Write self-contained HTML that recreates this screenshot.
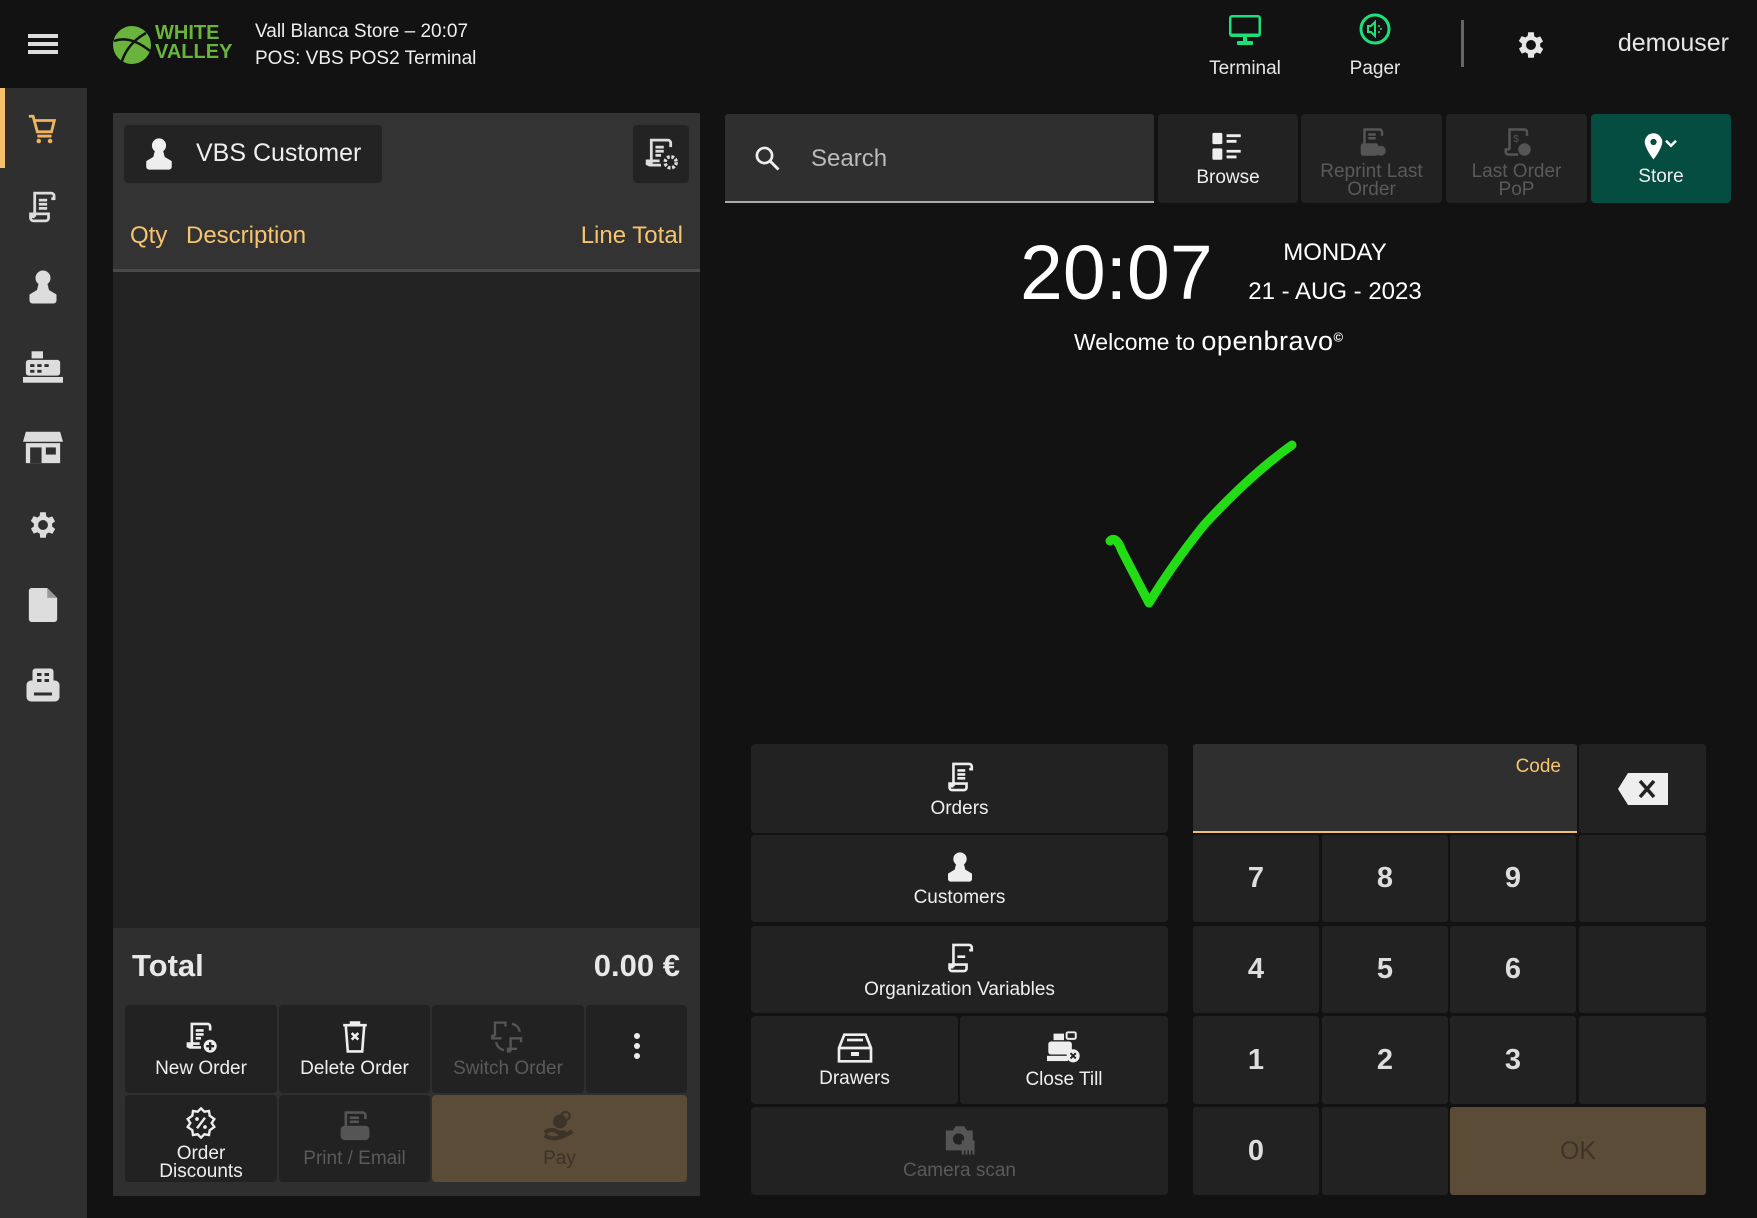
<!DOCTYPE html>
<html><head><meta charset="utf-8"><style>
*{margin:0;padding:0;box-sizing:border-box}
body{width:1757px;height:1218px;background:#121212;font-family:"Liberation Sans",sans-serif;color:#e6e6e6;position:relative;overflow:hidden}
.a{position:absolute}
.btn{position:absolute;background:#222;border-radius:4px;display:flex;flex-direction:column;align-items:center;justify-content:center;font-size:19px;color:#eee;text-align:center;line-height:18px}
.btn svg{margin-bottom:6px}
.dis{color:#5a5a5a}
.num{position:absolute;background:#222;border-radius:3px;display:flex;align-items:center;justify-content:center;font-size:29px;font-weight:bold;color:#ddd}
</style></head><body>
<div class="a" style="left:28px;top:34px;width:30px;height:4px;background:#ddd;box-shadow:0 8px 0 #ddd,0 16px 0 #ddd"></div>
<svg class="a" style="left:112px;top:25px" width="42" height="40" viewBox="0 0 42 40"><circle cx="20" cy="20" r="19" fill="#6ab43e"/><path d="M2 16 Q18 10 38 26 M10 36 Q16 18 34 8" stroke="#121212" stroke-width="2.5" fill="none"/></svg>
<div class="a" style="left:155px;top:24px;font-size:20px;font-weight:bold;color:#6ab43e;line-height:19px;font-family:'Liberation Sans Narrow','Liberation Sans',sans-serif">WHITE<br>VALLEY</div>
<div class="a" style="left:255px;top:18px;font-size:19px;line-height:27px;color:#eee">Vall Blanca Store – 20:07<br>POS: VBS POS2 Terminal</div>
<svg class="a" style="left:1227px;top:13px" width="36" height="34" viewBox="0 0 36 34"><rect x="2" y="2" width="32" height="22" rx="3" fill="#1ee07a"/><rect x="4.5" y="4.5" width="27" height="16" fill="#121212"/><rect x="16" y="24" width="4" height="5" fill="#1ee07a"/><rect x="10" y="28" width="16" height="4" rx="1" fill="#1ee07a"/></svg>
<div class="a" style="left:1195px;top:58px;width:100px;text-align:center;font-size:19px">Terminal</div>
<svg class="a" style="left:1358px;top:12px" width="34" height="34" viewBox="0 0 34 34"><circle cx="17" cy="17" r="14" stroke="#1ee07a" stroke-width="3" fill="none"/><path d="M10 14h3l4-4v14l-4-4h-3z" stroke="#1ee07a" stroke-width="2" fill="none"/><circle cx="21" cy="14" r="1" fill="#1ee07a"/><circle cx="21" cy="20" r="1" fill="#1ee07a"/><circle cx="23" cy="17" r="1" fill="#1ee07a"/></svg>
<div class="a" style="left:1325px;top:58px;width:100px;text-align:center;font-size:19px">Pager</div>
<div class="a" style="left:1461px;top:20px;width:3px;height:47px;background:#666"></div>
<svg class="a" style="left:1514px;top:28px" width="34" height="34" viewBox="0 0 24 24"><path fill="#e6e6e6" d="M19.4 13a7.5 7.5 0 000-2l2.1-1.6-2-3.5-2.5 1a7 7 0 00-1.7-1L15 3h-4l-.4 2.7a7 7 0 00-1.7 1l-2.5-1-2 3.5L6.6 11a7.5 7.5 0 000 2l-2.1 1.6 2 3.5 2.5-1a7 7 0 001.7 1L11 21h4l.4-2.7a7 7 0 001.7-1l2.5 1 2-3.5zM13 15.5a3.5 3.5 0 110-7 3.5 3.5 0 010 7z" transform="translate(-1 0)"/></svg>
<div class="a" style="right:28px;top:29px;font-size:25px;color:#e6e6e6">demouser</div>

<div class="a" style="left:0;top:88px;width:87px;height:1130px;background:#2f2f2f"></div>
<div class="a" style="left:0;top:88px;width:5px;height:80px;background:#f5be6b"></div>
<svg class="a" style="left:26px;top:112px" width="34" height="34" viewBox="0 0 24 24"><path d="M2 3h3l3 11h10l2-8H6.5" stroke="#f0b45e" stroke-width="2" fill="none"/><path d="M8 17h10" stroke="#f0b45e" stroke-width="2"/><circle cx="9" cy="20.5" r="1.6" fill="#f0b45e"/><circle cx="17" cy="20.5" r="1.6" fill="#f0b45e"/></svg>
<svg class="a" style="left:26px;top:189px" width="34" height="36" viewBox="0 0 24 26"><path d="M6 20V3h12a2 2 0 012 2v2h-2M6 20H3v-2h13v3a2 2 0 01-2 2H5a2 2 0 01-2-2" stroke="#ddd" stroke-width="2" fill="none"/><path d="M9 8h6M9 11h6M9 14h6" stroke="#ddd" stroke-width="2"/></svg>
<svg class="a" style="left:27px;top:269px" width="32" height="36" viewBox="0 0 20 24"><circle cx="10" cy="6" r="5" fill="#ddd"/><path d="M7 10h6l1 4 5 3v4a2 2 0 01-2 2H3a2 2 0 01-2-2v-4l5-3z" fill="#ddd"/></svg>
<svg class="a" style="left:23px;top:349px" width="40" height="36" viewBox="0 0 28 24"><rect x="6" y="1" width="8" height="5" fill="#ddd"/><rect x="2" y="7" width="24" height="11" rx="2" fill="#ddd"/><rect x="0" y="19" width="28" height="4" fill="#ddd"/><g fill="#2f2f2f"><rect x="5" y="10" width="3" height="2"/><rect x="10" y="10" width="3" height="2"/><rect x="15" y="10" width="3" height="2"/><rect x="5" y="14" width="3" height="2"/><rect x="10" y="14" width="3" height="2"/></g></svg>
<svg class="a" style="left:23px;top:428px" width="40" height="36" viewBox="0 0 28 24"><path d="M2 2h24l2 7H0z" fill="#ddd"/><rect x="2" y="10" width="24" height="14" fill="#ddd"/><rect x="5" y="13" width="8" height="11" fill="#2f2f2f"/><rect x="16" y="13" width="7" height="5" fill="#2f2f2f"/></svg>
<svg class="a" style="left:26px;top:508px" width="34" height="34" viewBox="0 0 24 24"><path fill="#ddd" d="M19.4 13a7.5 7.5 0 000-2l2.1-1.6-2-3.5-2.5 1a7 7 0 00-1.7-1L15 3h-4l-.4 2.7a7 7 0 00-1.7 1l-2.5-1-2 3.5L6.6 11a7.5 7.5 0 000 2l-2.1 1.6 2 3.5 2.5-1a7 7 0 001.7 1L11 21h4l.4-2.7a7 7 0 001.7-1l2.5 1 2-3.5zM13 15.5a3.5 3.5 0 110-7 3.5 3.5 0 010 7z" transform="translate(-1 0)"/></svg>
<svg class="a" style="left:28px;top:588px" width="30" height="34" viewBox="0 0 20 24"><path d="M2 0h11l7 7v15a2 2 0 01-2 2H2a2 2 0 01-2-2V2a2 2 0 012-2z" fill="#ddd"/><path d="M13 0v7h7" fill="#999"/></svg>
<svg class="a" style="left:25px;top:667px" width="36" height="36" viewBox="0 0 24 24"><rect x="5" y="1" width="14" height="12" rx="2" fill="#ddd"/><rect x="1" y="9" width="22" height="14" rx="3" fill="#ddd"/><g fill="#2f2f2f"><rect x="8" y="4" width="3" height="2"/><rect x="13" y="4" width="3" height="2"/><rect x="8" y="8" width="3" height="2"/><rect x="13" y="8" width="3" height="2"/><rect x="6" y="17" width="12" height="2"/></g></svg>

<div class="a" style="left:113px;top:113px;width:587px;height:1083px;background:#232323"></div>
<div class="a" style="left:113px;top:113px;width:587px;height:159px;background:#333;border-bottom:3px solid #4a4a4a"></div>
<div class="a" style="left:124px;top:125px;width:258px;height:58px;background:#232323;border-radius:4px"></div>
<svg class="a" style="left:143px;top:137px" width="32" height="34" viewBox="0 0 20 24"><circle cx="10" cy="6" r="5" fill="#eee"/><path d="M7 10h6l1 4 5 3v4a2 2 0 01-2 2H3a2 2 0 01-2-2v-4l5-3z" fill="#eee"/></svg>
<div class="a" style="left:196px;top:139px;font-size:25px;color:#eee">VBS Customer</div>
<div class="a" style="left:633px;top:125px;width:56px;height:58px;background:#232323;border-radius:4px"></div>
<svg class="a" style="left:643px;top:136px" width="36" height="36" viewBox="0 0 26 26"><path d="M6 20V3h12a2 2 0 012 2v3M6 20H3v-2h9M3 18v1a2 2 0 002 2h8" stroke="#ddd" stroke-width="2" fill="none"/><path d="M9 8h6M9 11h6M9 14h4" stroke="#ddd" stroke-width="2"/><circle cx="20" cy="19" r="4" stroke="#ddd" stroke-width="2.5" stroke-dasharray="2 1.2" fill="none"/></svg>
<div class="a" style="left:130px;top:222px;font-size:24px;color:#f7c46d">Qty</div>
<div class="a" style="left:186px;top:222px;font-size:24px;color:#f7c46d">Description</div>
<div class="a" style="right:1074px;top:222px;font-size:24px;color:#f7c46d">Line Total</div>
<div class="a" style="left:113px;top:928px;width:587px;height:268px;background:#2f2f2f"></div>
<div class="a" style="left:132px;top:948px;font-size:31px;font-weight:bold;color:#e8e8e8">Total</div>
<div class="a" style="right:1077px;top:948px;font-size:31px;font-weight:bold;color:#e8e8e8">0.00 €</div>

<div class="btn" style="left:125px;top:1005px;width:152px;height:88px"><svg width="34" height="34" viewBox="0 0 26 26"><path d="M6 20V3h12a2 2 0 012 2v3M6 20H3v-2h9M3 18v1a2 2 0 002 2h8" stroke="#eee" stroke-width="2" fill="none"/><path d="M9 8h6M9 11h6M9 14h4" stroke="#eee" stroke-width="2"/><circle cx="20" cy="20" r="5" fill="#eee"/><path d="M20 17v6M17 20h6" stroke="#222" stroke-width="1.8"/></svg>New Order</div>
<div class="btn" style="left:279px;top:1005px;width:151px;height:88px"><svg width="30" height="34" viewBox="0 0 22 26"><path d="M2 4h18M8 4V2h6v2M4 5l1.5 19h11L18 5" stroke="#eee" stroke-width="2" fill="none"/><path d="M8.5 10l5 5M13.5 10l-5 5" stroke="#eee" stroke-width="2"/></svg>Delete Order</div>
<div class="btn dis" style="left:432px;top:1005px;width:152px;height:88px"><svg width="34" height="34" viewBox="0 0 26 26" stroke="#555" stroke-width="1.8" fill="none"><path d="M3 12V2h8v3M3 12H1v2h7"/><path d="M15 24V14h8v3M15 24h-2v-2h7"/><path d="M16 3a7 7 0 016 6M10 23a7 7 0 01-6-6"/></svg>Switch Order</div>
<div class="btn" style="left:586px;top:1005px;width:101px;height:88px"><svg width="8" height="28" viewBox="0 0 8 28"><circle cx="4" cy="4" r="3" fill="#eee"/><circle cx="4" cy="14" r="3" fill="#eee"/><circle cx="4" cy="24" r="3" fill="#eee"/></svg></div>
<div class="btn" style="left:125px;top:1095px;width:152px;height:87px;padding-top:10px"><svg width="32" height="32" viewBox="0 0 24 24"><path d="M12 1l2.5 2.5 3.5-.5.5 3.5L22 9l-2 3 2 3-3.5 2.5-.5 3.5-3.5-.5L12 23l-2.5-2.5-3.5.5-.5-3.5L2 15l2-3-2-3 3.5-2.5L6 3l3.5.5z" stroke="#eee" stroke-width="1.8" fill="none"/><path d="M9 16l6-8" stroke="#eee" stroke-width="1.8"/><circle cx="9" cy="9" r="1.4" fill="#eee"/><circle cx="15" cy="15" r="1.4" fill="#eee"/></svg>Order<br>Discounts</div>
<div class="btn dis" style="left:279px;top:1095px;width:151px;height:87px"><svg width="32" height="34" viewBox="0 0 24 26"><path d="M5 12V2h13a2 2 0 012 2v3" stroke="#555" stroke-width="2" fill="none"/><path d="M8 6h7M8 9h7" stroke="#555" stroke-width="2"/><rect x="1" y="12" width="22" height="11" rx="3" fill="#555"/></svg>Print / Email</div>
<div class="btn" style="left:432px;top:1095px;width:255px;height:87px;background:#5a4c37;color:#3c3428"><svg width="36" height="34" viewBox="0 0 26 24"><circle cx="13" cy="8" r="5" fill="#3c3428"/><circle cx="17" cy="4" r="3" stroke="#3c3428" stroke-width="1.5" fill="none"/><path d="M2 16c4-3 7-2 10 0h5l-5 2m-10 0c4 3 9 4 20-3" stroke="#3c3428" stroke-width="3" fill="none"/></svg>Pay</div>

<div class="a" style="left:725px;top:114px;width:429px;height:89px;background:#2f2f2f;border-bottom:2px solid #aaa;border-radius:3px 3px 0 0"></div>
<svg class="a" style="left:754px;top:145px" width="28" height="28" viewBox="0 0 24 24"><circle cx="9" cy="9" r="6.5" stroke="#eee" stroke-width="2.3" fill="none"/><path d="M14 14l7 7" stroke="#eee" stroke-width="2.5"/></svg>
<div class="a" style="left:811px;top:145px;font-size:24px;color:#bbb">Search</div>
<div class="btn" style="left:1158px;top:114px;width:140px;height:89px"><svg width="34" height="32" viewBox="0 0 24 22"><rect x="1" y="1" width="7" height="8" rx="1" fill="#eee"/><rect x="1" y="12" width="7" height="8" rx="1" fill="#eee"/><path d="M11 3h10M11 7h7M11 14h10M11 18h7" stroke="#eee" stroke-width="2"/></svg>Browse</div>
<div class="btn dis" style="left:1301px;top:114px;width:141px;height:89px;padding-top:8px"><svg width="34" height="30" viewBox="0 0 24 24"><path d="M6 14V2h12a2 2 0 012 2v3" stroke="#555" stroke-width="2" fill="none"/><path d="M9 6h6M9 9h6" stroke="#555" stroke-width="2"/><rect x="3" y="13" width="14" height="10" rx="2" fill="#555"/><circle cx="19" cy="19" r="4" fill="#555"/></svg>Reprint Last<br>Order</div>
<div class="btn dis" style="left:1446px;top:114px;width:141px;height:89px;padding-top:8px"><svg width="34" height="30" viewBox="0 0 24 24"><path d="M6 18V2h12a2 2 0 012 2v3M6 18H3v2a2 2 0 002 2h8" stroke="#555" stroke-width="2" fill="none"/><text x="9" y="12" font-size="8" fill="#555" font-family="Liberation Sans">$</text><circle cx="18" cy="18" r="5" fill="#555"/></svg>Last Order<br>PoP</div>
<div class="btn" style="left:1591px;top:114px;width:140px;height:89px;background:#044d40"><svg width="40" height="30" viewBox="0 0 30 24"><path d="M9 1a7 7 0 017 7c0 5-7 14-7 14S2 13 2 8a7 7 0 017-7z" fill="#fff"/><circle cx="9" cy="8" r="2.5" fill="#044d40"/><path d="M19 7l4 4 4-4" stroke="#fff" stroke-width="2" fill="none"/></svg>Store</div>

<div class="a" style="left:1020px;top:229px;font-size:77px;color:#fff;line-height:88px">20:07</div>
<div class="a" style="left:1235px;top:239px;width:200px;text-align:center;font-size:24px;color:#fff">MONDAY</div>
<div class="a" style="left:1235px;top:278px;width:200px;text-align:center;font-size:24px;color:#fff">21 - AUG - 2023</div>
<div class="a" style="left:1074px;top:326px;font-size:23px;color:#fff">Welcome to <span style="font-size:27px;letter-spacing:0.5px">openbravo</span><sup style="font-size:13px;font-weight:bold">©</sup></div>
<svg class="a" style="left:1100px;top:435px" width="200" height="180"><path d="M10 106 Q16 100 22 116 L49 168 Q72 130 104 90 Q150 40 192 10" stroke="#22dd16" stroke-width="9" fill="none" stroke-linecap="round" stroke-linejoin="round"/></svg>

<div class="btn" style="left:751px;top:744px;width:417px;height:89px"><svg width="30" height="34" viewBox="0 0 22 26"><path d="M6 20V3h12a2 2 0 012 2v2h-2M6 20H3v-2h13v3a2 2 0 01-2 2H5a2 2 0 01-2-2" stroke="#eee" stroke-width="2" fill="none"/><path d="M9 8h6M9 11h6M9 14h6" stroke="#eee" stroke-width="2"/></svg>Orders</div>
<div class="btn" style="left:751px;top:835px;width:417px;height:87px"><svg width="28" height="32" viewBox="0 0 20 24"><circle cx="10" cy="6" r="5" fill="#eee"/><path d="M7 10h6l1 4 5 3v4a2 2 0 01-2 2H3a2 2 0 01-2-2v-4l5-3z" fill="#eee"/></svg>Customers</div>
<div class="btn" style="left:751px;top:926px;width:417px;height:87px"><svg width="30" height="34" viewBox="0 0 22 26"><path d="M6 20V3h12a2 2 0 012 2v2h-2M6 20H3v-2h13v3a2 2 0 01-2 2H5a2 2 0 01-2-2" stroke="#eee" stroke-width="2" fill="none"/><path d="M9 12h6" stroke="#eee" stroke-width="2"/></svg>Organization Variables</div>
<div class="btn" style="left:751px;top:1016px;width:207px;height:88px"><svg width="38" height="32" viewBox="0 0 28 24"><path d="M6 2h16l4 10v10H2V12z M2 12h24" stroke="#eee" stroke-width="2" fill="none"/><path d="M8 6h12" stroke="#eee" stroke-width="2"/><rect x="11" y="15" width="6" height="3" fill="#eee"/></svg>Drawers</div>
<div class="btn" style="left:960px;top:1016px;width:208px;height:88px"><svg width="36" height="34" viewBox="0 0 26 26"><rect x="5" y="2" width="8" height="5" fill="#eee"/><rect x="15" y="1" width="7" height="5" rx="1" stroke="#eee" stroke-width="1.5" fill="none"/><rect x="1" y="8" width="18" height="10" rx="2" fill="#eee"/><rect x="0" y="19" width="16" height="4" fill="#eee"/><circle cx="20" cy="19" r="5" fill="#eee"/><path d="M18 17l4 4M22 17l-4 4" stroke="#222" stroke-width="1.5"/></svg>Close Till</div>
<div class="btn dis" style="left:751px;top:1107px;width:417px;height:88px"><svg width="34" height="34" viewBox="0 0 24 24"><path d="M2 6h5l2-3h6l2 3h4v14H2z" fill="#555"/><circle cx="11" cy="12" r="4" fill="#222"/><path d="M14 13v10M16.5 13v10M19 13v10M21.5 13v10" stroke="#555" stroke-width="1.5"/></svg>Camera scan</div>

<div class="a" style="left:1193px;top:744px;width:384px;height:89px;background:#2f2f2f;border-bottom:2px solid #f5be6b;border-radius:3px 3px 0 0"></div>
<div class="a" style="right:196px;top:756px;font-size:19px;color:#f7c46d">Code</div>
<div class="num" style="left:1579px;top:744px;width:127px;height:89px"><svg width="54" height="36" viewBox="0 0 54 36"><path d="M12 2h40v32H12L2 18z" fill="#eee"/><path d="M24 10l14 16M38 10L24 26" stroke="#222" stroke-width="3.5"/></svg></div>
<div class="num" style="left:1193px;top:835px;width:126px;height:87px">7</div>
<div class="num" style="left:1322px;top:835px;width:126px;height:87px">8</div>
<div class="num" style="left:1450px;top:835px;width:126px;height:87px">9</div>
<div class="num" style="left:1579px;top:835px;width:127px;height:87px"></div>
<div class="num" style="left:1193px;top:926px;width:126px;height:87px">4</div>
<div class="num" style="left:1322px;top:926px;width:126px;height:87px">5</div>
<div class="num" style="left:1450px;top:926px;width:126px;height:87px">6</div>
<div class="num" style="left:1579px;top:926px;width:127px;height:87px"></div>
<div class="num" style="left:1193px;top:1016px;width:126px;height:88px">1</div>
<div class="num" style="left:1322px;top:1016px;width:126px;height:88px">2</div>
<div class="num" style="left:1450px;top:1016px;width:126px;height:88px">3</div>
<div class="num" style="left:1579px;top:1016px;width:127px;height:88px"></div>
<div class="num" style="left:1193px;top:1107px;width:126px;height:88px">0</div>
<div class="num" style="left:1322px;top:1107px;width:126px;height:88px"></div>
<div class="num" style="left:1450px;top:1107px;width:256px;height:88px;background:#5a4c37;color:#3c3428;font-weight:normal;font-size:25px">OK</div>
</body></html>
